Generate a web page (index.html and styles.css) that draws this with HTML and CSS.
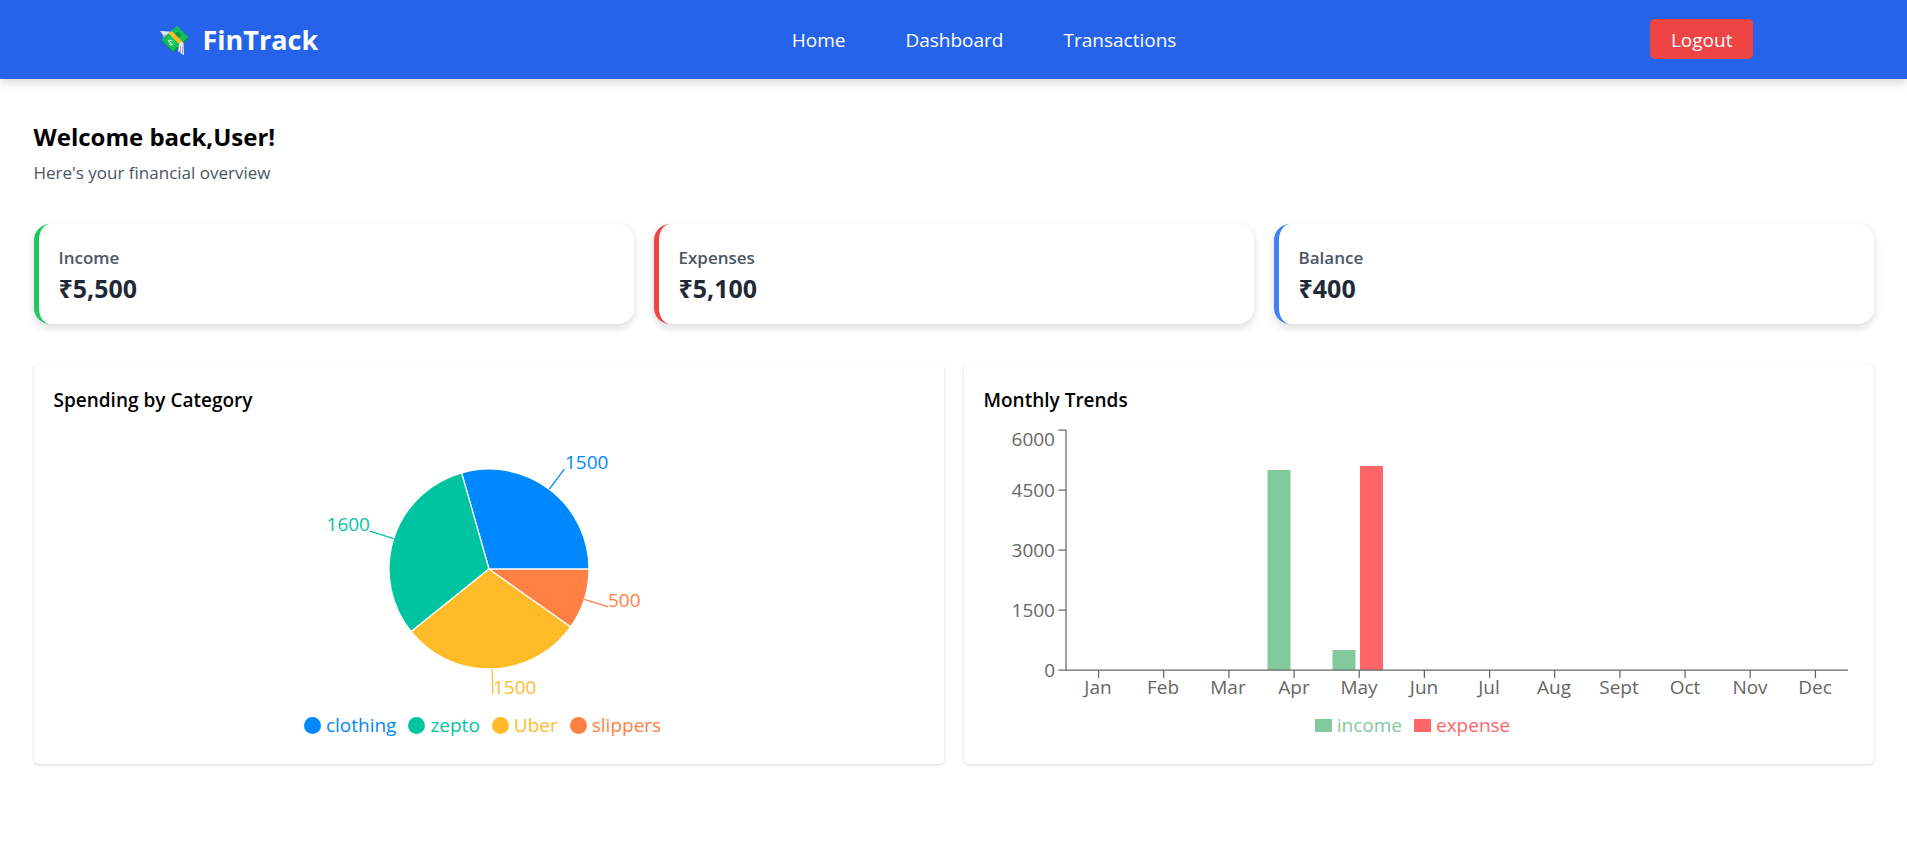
FILE: index.html
```html
<!DOCTYPE html>
<html lang="en">
<head>
<meta charset="utf-8">
<meta name="viewport" content="width=device-width, initial-scale=1">
<title>FinTrack</title>
<link rel="stylesheet" href="styles.css">
</head>
<body>
<header class="topbar">
  <div class="topbar-inner">
    <a class="brand" href="#">
      <svg class="brand-icon" viewBox="0 0 28 29" aria-hidden="true">
        <path fill="#e4e4e7" d="M0 5 10 5.500 12 10 4 12 3 9Z"/>
        <path fill="#b8b8c0" d="M3 9 10 8 11 11 4 12Z"/>
        <path fill="#0b8f49" d="M1.500 15 13 26.500 28 13 28 11 17 0Z"/>
        <path fill="#12c75b" d="M1.500 13.500 17 0 28 11 13 25Z"/>
        <path fill="none" stroke="#0a9a4a" stroke-dasharray="2 1" d="M4 13.500 17 2.500 25.500 11 13 22.500Z"/>
        <circle cx="18" cy="9" r="3" fill="#0b9b4b"/>
        <path fill="none" stroke="#e9fff0" stroke-linecap="round" d="M12.500 15C10 13 7.500 15 10 16.500S12.500 20 9.500 18.500M8.500 14.500 13 19"/>
        <path fill="#fdb927" d="M8.500 7.500 11.500 5 23.500 16.500 20.500 19.500Z"/>
        <path fill="#e9e9ee" d="M19 18C20 16 22 16 23.500 17L24 29C21.500 28 20 27 20 25.500L18 25.500Z"/>
        <path fill="none" stroke="#aaaab4" d="M20.500 20V26M22.500 21V27.500"/>
      </svg>
      <span>FinTrack</span>
    </a>
    <nav class="nav">
      <a href="#">Home</a>
      <a href="#">Dashboard</a>
      <a href="#">Transactions</a>
    </nav>
    <button class="logout" type="button">Logout</button>
  </div>
</header>

<main class="page">
  <section class="welcome">
    <h1>Welcome back,User!</h1>
    <p>Here's your financial overview</p>
  </section>

  <section class="stats">
    <article class="stat stat-income"><h2>Income</h2><p>₹5,500</p></article>
    <article class="stat stat-expenses"><h2>Expenses</h2><p>₹5,100</p></article>
    <article class="stat stat-balance"><h2>Balance</h2><p>₹400</p></article>
  </section>

  <section class="charts">
    <article class="panel">
      <h2>Spending by Category</h2>
      <svg class="chart" viewBox="0 0 870 275" role="img" aria-label="Spending by category">
        <g stroke="#fff">
          <path fill="#0088fe" d="M435 144H535A100 100 0 0 0 407.600 47.800Z"/>
          <path fill="#00c49f" d="M435 144 407.600 47.800A100 100 0 0 0 357.100 206.700Z"/>
          <path fill="#ffbb28" d="M435 144 357.100 206.700A100 100 0 0 0 516.600 201.800Z"/>
          <path fill="#ff8042" d="M435 144 516.600 201.800A100 100 0 0 0 535 144Z"/>
        </g>
        <path stroke="#0088fe" d="M495.300 64.200 510.300 44.200"/>
        <path stroke="#00c49f" d="M339.700 113.700 315.900 106.100"/>
        <path stroke="#ffbb28" d="M438.100 244 438.900 269"/>
        <path stroke="#ff8042" d="M530.300 174.300 554.100 181.900"/>
        <text x="511" y="44" fill="#0088fe">1500</text>
        <text x="316" y="106" fill="#00c49f" text-anchor="end">1600</text>
        <text x="439" y="269" fill="#ffbb28">1500</text>
        <text x="554" y="182" fill="#ff8042">500</text>
      </svg>
      <ul class="legend legend-round">
        <li class="c-clothing">clothing</li>
        <li class="c-zepto">zepto</li>
        <li class="c-uber">Uber</li>
        <li class="c-slippers">slippers</li>
      </ul>
    </article>

    <article class="panel">
      <h2>Monthly Trends</h2>
      <svg class="chart" viewBox="0 0 870 275" role="img" aria-label="Monthly income and expense">
        <g fill="#82ca9d">
          <rect x="283.500" y="45" width="23" height="200"/>
          <rect x="348.500" y="225" width="23" height="20"/>
        </g>
        <rect x="376" y="41" width="23" height="204" fill="#ff6668"/>
        <g class="axis">
          <path d="M82 5V245M82 245H864"/>
          <path d="M74.500 5H82M74.500 65H82M74.500 125H82M74.500 185H82M74.500 245H82"/>
          <path d="M114.600 245V253M179.700 245V253M244.900 245V253M310.100 245V253M375.200 245V253M440.400 245V253M505.600 245V253M570.700 245V253M635.900 245V253M701.100 245V253M766.200 245V253M831.400 245V253"/>
        </g>
        <g class="tick tick-y">
          <text x="71" y="21">6000</text>
          <text x="71" y="72">4500</text>
          <text x="71" y="132">3000</text>
          <text x="71" y="192">1500</text>
          <text x="71" y="252">0</text>
        </g>
        <g class="tick tick-x">
          <text x="114" y="269">Jan</text>
          <text x="179" y="269">Feb</text>
          <text x="244" y="269">Mar</text>
          <text x="310" y="269">Apr</text>
          <text x="375" y="269">May</text>
          <text x="440" y="269">Jun</text>
          <text x="505" y="269">Jul</text>
          <text x="570" y="269">Aug</text>
          <text x="635" y="269">Sept</text>
          <text x="701" y="269">Oct</text>
          <text x="766" y="269">Nov</text>
          <text x="831" y="269">Dec</text>
        </g>
      </svg>
      <ul class="legend">
        <li class="c-income">income</li>
        <li class="c-expense">expense</li>
      </ul>
    </article>
  </section>
</main>
</body>
</html>
```

FILE: styles.css
```css
* { box-sizing: border-box; margin: 0; padding: 0; }

body {
  font-family: "Segoe UI", "Open Sans", "Noto Sans", sans-serif;
  font-size: 19px;
  line-height: 30px;
  color: #000;
  background: #fff;
}

a { color: inherit; text-decoration: none; }

.topbar {
  background: #2563eb;
  color: #fff;
  padding: 19px 20px 20px;
  box-shadow: 0 4px 8px rgba(0, 0, 0, 0.14);
}

.topbar-inner {
  max-width: 1600px;
  margin: 0 auto;
  display: flex;
  align-items: center;
  justify-content: space-between;
}

.brand {
  display: flex;
  align-items: center;
  gap: 15px;
  padding: 2px 0 0 6px;
  font-size: 27px;
  font-weight: 700;
  line-height: 38px;
}

.brand-icon { width: 28px; height: 29px; }

.nav { display: flex; gap: 60px; padding-top: 2px; }

.logout {
  font: inherit;
  color: #fff;
  background: #ef4444;
  border: 0;
  border-radius: 5px;
  padding: 6px 21px 4px;
  cursor: pointer;
}

.page {
  max-width: 1840px;
  margin: 0 auto;
  padding: 38px 0 40px;
}

.welcome { margin-bottom: 36px; }
.welcome h1 { font-size: 24px; font-weight: 700; line-height: 40px; }
.welcome p { font-size: 17px; line-height: 31px; color: #4b5563; }

.stats {
  display: grid;
  grid-template-columns: repeat(3, 1fr);
  gap: 20px;
  margin-bottom: 40px;
}

.stat {
  padding: 20px;
  border-left: 5px solid;
  border-radius: 16px;
  box-shadow: 0 4px 8px rgba(0, 0, 0, 0.14);
}

.stat h2 { font-size: 17px; font-weight: 600; line-height: 28px; color: #4b5563; }
.stat p { font-size: 25px; font-weight: 700; line-height: 32px; color: #1f2937; }
.stat-income { border-color: #22c55e; }
.stat-expenses { border-color: #ef4444; }
.stat-balance { border-color: #3b82f6; }

.charts {
  display: grid;
  grid-template-columns: repeat(2, 1fr);
  gap: 20px;
}

.panel {
  padding: 21px 20px 24px;
  border-radius: 5px;
  box-shadow: 0 1px 3px rgba(0, 0, 0, 0.16);
}

.panel h2 { font-size: 19px; font-weight: 600; line-height: 30px; margin-bottom: 10px; }

.chart {
  display: block;
  width: 100%;
  height: auto;
  overflow: visible;
  font-size: 19px;
  stroke-width: 1.25;
}

.axis { stroke: #666; fill: none; }
.tick { fill: #666; }
.tick-y { text-anchor: end; }
.tick-x { text-anchor: middle; }

.legend {
  display: flex;
  justify-content: center;
  list-style: none;
  margin-top: 10px;
}

.legend li {
  display: flex;
  align-items: center;
  gap: 5px;
  margin-right: 12px;
}

.legend li::before {
  content: "";
  width: 17px;
  height: 13px;
  background: currentColor;
}

.legend-round li::before { height: 17px; border-radius: 50%; }

.c-clothing { color: #0088fe; }
.c-zepto { color: #00c49f; }
.c-uber { color: #ffbb28; }
.c-slippers { color: #ff8042; }
.c-income { color: #82ca9d; }
.c-expense { color: #ff6668; }
```
